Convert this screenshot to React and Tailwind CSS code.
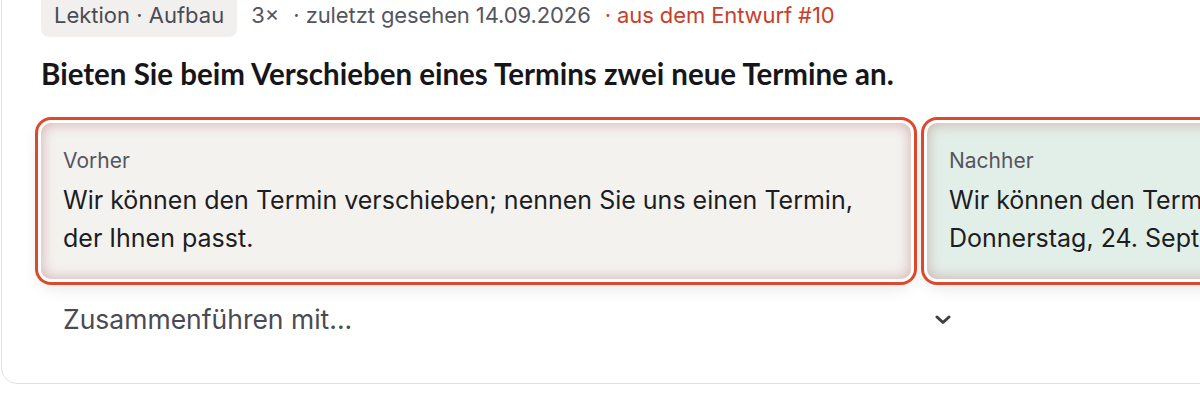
import React from 'react';

const Chevron = () => (
  <svg width="16" height="10" viewBox="0 0 16 10" fill="none">
    <path d="M2 2l6 5.5L14 2" stroke="#3f3f46" strokeWidth="3" strokeLinecap="round" strokeLinejoin="round" />
  </svg>
);

const DiffBox = ({ label, children, tone }) => (
  <div
    className={`w-[870px] rounded-[10px] px-[22px] pt-[24px] pb-[22px] shadow-[inset_0_0_14px_rgba(170,90,90,0.45),0_0_0_3px_#ffffff,0_0_0_6px_#dc4a2d,0_6px_18px_rgba(0,0,0,0.14)] ${
      tone === 'after' ? 'bg-[#e2efe8]' : 'bg-[#f3f2ef]'
    }`}
  >
    <div className="text-[21px] leading-[28px] text-[#55555f]">{label}</div>
    <div className="mt-[6px] whitespace-nowrap text-[25px] leading-[38px] text-[#1d1d22]">{children}</div>
  </div>
);

export default function App() {
  return (
    <div className="w-[1200px] h-[400px] overflow-hidden bg-white font-['Inter',sans-serif]">
      {/* Karte */}
      <div className="ml-px -mt-[48px] w-[1840px] rounded-2xl border border-[#e2e2e2] bg-white px-[39px] pt-[40px] pb-[41px]">
        {/* Meta-Zeile */}
        <div className="flex items-center gap-[14px] text-[22px] text-[#55555f]">
          <span className="rounded-lg bg-[#f1f0ee] px-[13px] py-[7px] leading-[30px] text-[#4b4b55]">Lektion · Aufbau</span>
          <span>3×</span>
          <span className="tracking-[-0.1px]">· zuletzt gesehen 14.09.2026</span>
          <span className="tracking-[-0.1px] text-[#c8402a]">· aus dem Entwurf #10</span>
        </div>

        <h2 className="mt-[19px] font-['Lato',sans-serif] text-[29.5px] font-bold leading-[36px] text-[#16161a]">
          Bieten Sie beim Verschieben eines Termins zwei neue Termine an.
        </h2>

        {/* Vorher / Nachher */}
        <div className="mt-[31px] flex gap-4">
          <DiffBox label="Vorher">
            Wir können den Termin verschieben; nennen Sie uns einen Termin,
            <br />
            der Ihnen passt.
          </DiffBox>
          <DiffBox label="Nachher" tone="after">
            Wir können den Termin verschieben: Passt Ihnen Dienstag oder
            <br />
            Donnerstag, 24. September, jeweils um 10 Uhr?
          </DiffBox>
        </div>

        {/* Auswahl */}
        <div className="mt-[19px] flex h-[44px] w-[926px] items-center justify-between pl-[22px] pr-[16px]">
          <span className="text-[26.5px] text-[#4a4a55]">Zusammenführen mit...</span>
          <Chevron />
        </div>
      </div>
    </div>
  );
}
